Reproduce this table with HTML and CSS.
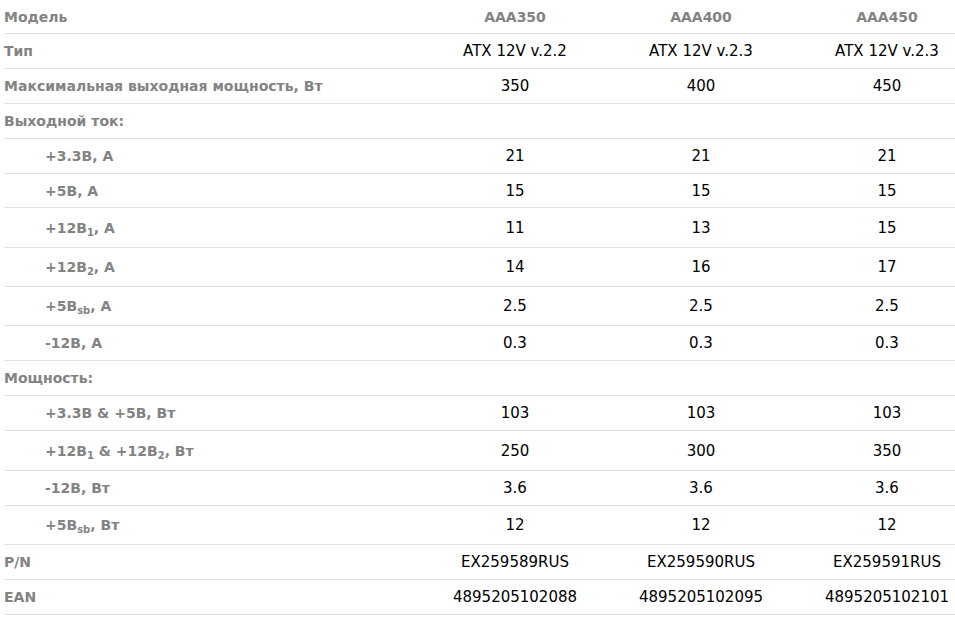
FILE: index.html
```html
<!DOCTYPE html>
<html lang="ru">
<head>
<meta charset="utf-8">
<title>Характеристики</title>
<link rel="stylesheet" href="styles.css">
</head>
<body>
<div class="specs">
  <div class="row h34"><div class="lbl">Модель</div><div class="val model">AAA350</div><div class="val model">AAA400</div><div class="val model">AAA450</div></div>
  <div class="row"><div class="lbl">Тип</div><div class="val">ATX 12V v.2.2</div><div class="val">ATX 12V v.2.3</div><div class="val">ATX 12V v.2.3</div></div>
  <div class="row"><div class="lbl">Максимальная выходная мощность, Вт</div><div class="val">350</div><div class="val">400</div><div class="val">450</div></div>
  <div class="row"><div class="lbl">Выходной ток:</div><div class="val"></div><div class="val"></div><div class="val"></div></div>
  <div class="row"><div class="lbl sub">+3.3В, А</div><div class="val">21</div><div class="val">21</div><div class="val">21</div></div>
  <div class="row h34"><div class="lbl sub">+5В, А</div><div class="val">15</div><div class="val">15</div><div class="val">15</div></div>
  <div class="row h40"><div class="lbl sub">+12В<sub>1</sub>, А</div><div class="val">11</div><div class="val">13</div><div class="val">15</div></div>
  <div class="row h39"><div class="lbl sub">+12В<sub>2</sub>, А</div><div class="val">14</div><div class="val">16</div><div class="val">17</div></div>
  <div class="row h39"><div class="lbl sub">+5В<sub>sb</sub>, А</div><div class="val">2.5</div><div class="val">2.5</div><div class="val">2.5</div></div>
  <div class="row"><div class="lbl sub">-12В, А</div><div class="val">0.3</div><div class="val">0.3</div><div class="val">0.3</div></div>
  <div class="row"><div class="lbl">Мощность:</div><div class="val"></div><div class="val"></div><div class="val"></div></div>
  <div class="row"><div class="lbl sub">+3.3В &amp; +5В, Вт</div><div class="val">103</div><div class="val">103</div><div class="val">103</div></div>
  <div class="row h40"><div class="lbl sub">+12В<sub>1</sub> &amp; +12В<sub>2</sub>, Вт</div><div class="val">250</div><div class="val">300</div><div class="val">350</div></div>
  <div class="row"><div class="lbl sub">-12В, Вт</div><div class="val">3.6</div><div class="val">3.6</div><div class="val">3.6</div></div>
  <div class="row h39"><div class="lbl sub">+5В<sub>sb</sub>, Вт</div><div class="val">12</div><div class="val">12</div><div class="val">12</div></div>
  <div class="row"><div class="lbl">P/N</div><div class="val">EX259589RUS</div><div class="val">EX259590RUS</div><div class="val">EX259591RUS</div></div>
  <div class="row"><div class="lbl">EAN</div><div class="val">4895205102088</div><div class="val">4895205102095</div><div class="val">4895205102101</div></div>
</div>
</body>
</html>
```
FILE: styles.css
```css
html, body {
  margin: 0;
  padding: 0;
  background: #fff;
  overflow: hidden;
}
body {
  padding-left: 4px;
  font-family: "DejaVu Sans", "Liberation Sans", sans-serif;
  font-size: 15px;
  color: #000;
}
.specs {
  display: flex;
  flex-direction: column;
}
.row {
  display: grid;
  grid-template-columns: 418px 186px 186px 186px;
  align-items: center;
  height: 35px;
  box-sizing: border-box;
  border-bottom: 1px solid #e2e2e2;
}
.row.h34 { height: 34px; }
.row.h39 { height: 39px; }
.row.h40 { height: 40px; }
.lbl {
  color: #838383;
  font-weight: 700;
  font-size: 14px;
  white-space: nowrap;
}
.lbl.sub {
  padding-left: 41px;
}
.val {
  text-align: center;
  white-space: nowrap;
}
.val.model {
  color: #838383;
  font-weight: 700;
  font-size: 14px;
}
sub {
  font-size: 10px;
  line-height: 0;
  vertical-align: -3px;
}
```
